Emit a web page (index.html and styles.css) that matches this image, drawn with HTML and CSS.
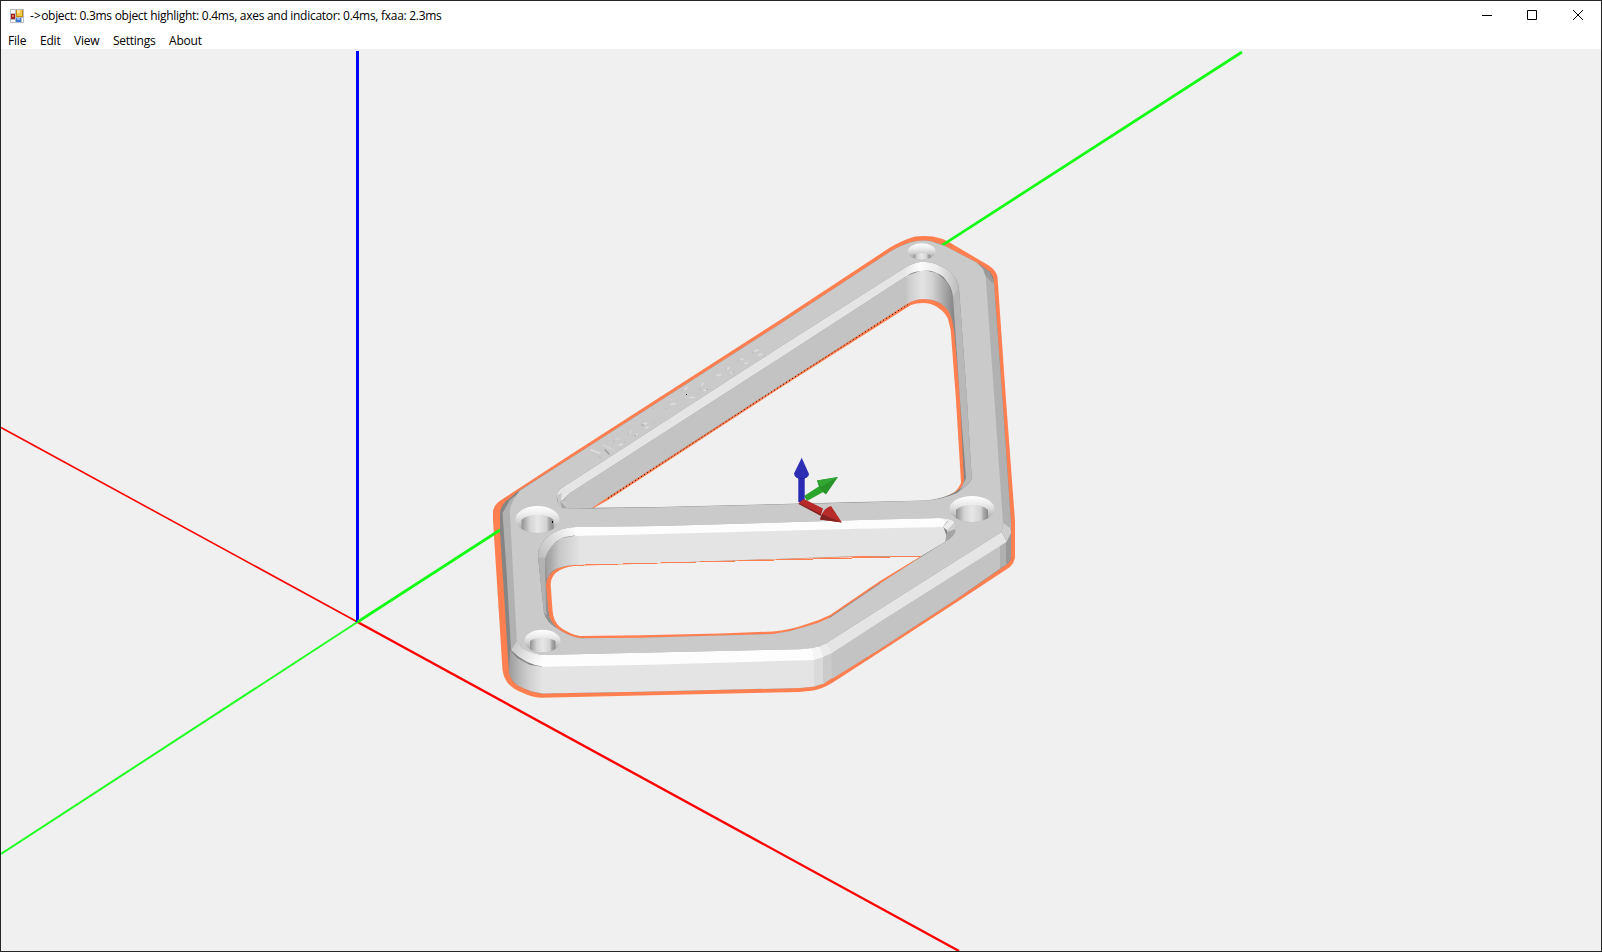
FILE: index.html
```
<!DOCTYPE html>
<html lang="en">
<head>
<meta charset="utf-8">
<title>Model viewer</title>
<link rel="stylesheet" href="styles.css">
</head>
<body>
<div class="window">
  <header class="titlebar">
    <svg class="app-icon" width="14" height="14" viewBox="0 0 14 14" shape-rendering="crispEdges">
      <rect width="14" height="14" fill="#b9bcc0"/>
      <path d="M1 1h4v3H1zM1 11h4v2H1zM12 9h1v4h-1z" fill="#fff"/>
      <rect x="6" y="1" width="7" height="7" fill="#c58b12"/><rect x="7" y="1" width="5" height="6" fill="#f9c846"/><rect x="7" y="1" width="3" height="3" fill="#ffe59a"/>
      <rect x="1" y="5" width="4" height="5" fill="#a52019"/><rect x="2" y="6" width="2" height="2" fill="#e37b6d"/>
      <rect x="6" y="9" width="5" height="4" fill="#3b78d8"/><rect x="7" y="9" width="3" height="2" fill="#8fbaf5"/>
    </svg>
    <span class="title"><span class="arrow">-&gt;</span>object: 0.3ms object highlight: 0.4ms, axes and indicator: 0.4ms, fxaa: 2.3ms</span>
    <div class="controls">
      <svg width="46" height="29" viewBox="0 0 46 29"><path d="M18 14.5h10" class="ctl"/></svg>
      <svg width="46" height="29" viewBox="0 0 46 29"><path d="M17.5 9.5h9v9h-9z" class="ctl"/></svg>
      <svg width="46" height="29" viewBox="0 0 46 29"><path d="M17 9l10 10M27 9L17 19" class="ctl"/></svg>
    </div>
  </header>
  <nav class="menu">
    <span class="m-file">File</span><span class="m-edit">Edit</span><span class="m-view">View</span><span class="m-settings">Settings</span><span class="m-about">About</span>
  </nav>
  <main class="viewport">
    <svg class="scene" width="1600" height="902" viewBox="1 49 1600 902">
      <defs>
        <linearGradient id="wallTop" gradientUnits="userSpaceOnUse" x1="905" y1="0" x2="954" y2="0">
          <stop offset="0" stop-color="#c3c3c3"/><stop offset=".1" stop-color="#cfcfcf"/><stop offset=".35" stop-color="#e3e3e3"/><stop offset=".55" stop-color="#d2d2d2"/><stop offset=".8" stop-color="#a8a8a8"/><stop offset="1" stop-color="#858585"/>
        </linearGradient>
        <linearGradient id="wallLow" gradientUnits="userSpaceOnUse" x1="543" y1="0" x2="580" y2="0">
          <stop offset="0" stop-color="#999"/><stop offset=".2" stop-color="#a8a8a8"/><stop offset=".45" stop-color="#c8c8c8"/><stop offset="1" stop-color="#e3e3e3"/>
        </linearGradient>
        <linearGradient id="chLow" gradientUnits="userSpaceOnUse" x1="538" y1="556" x2="576" y2="530">
          <stop offset="0" stop-color="#bdbdbd"/><stop offset=".45" stop-color="#dadada"/><stop offset="1" stop-color="#fdfdfd"/>
        </linearGradient>
        <linearGradient id="chTop" gradientUnits="userSpaceOnUse" x1="903" y1="0" x2="960" y2="0">
          <stop offset="0" stop-color="#e5e5e5"/><stop offset=".3" stop-color="#fbfbfb"/><stop offset=".6" stop-color="#ececec"/><stop offset="1" stop-color="#b9b9b9"/>
        </linearGradient>
        <linearGradient id="front" gradientUnits="userSpaceOnUse" x1="509" y1="0" x2="543" y2="0">
          <stop offset="0" stop-color="#9c9c9c"/><stop offset=".3" stop-color="#b8b8b8"/><stop offset=".6" stop-color="#d0d0d0"/><stop offset="1" stop-color="#e4e4e4"/>
        </linearGradient>
        <linearGradient id="frontCh" gradientUnits="userSpaceOnUse" x1="512" y1="642" x2="543" y2="660">
          <stop offset="0" stop-color="#c2c2c2"/><stop offset=".5" stop-color="#e3e3e3"/><stop offset="1" stop-color="#fdfdfd"/>
        </linearGradient>
        <linearGradient id="bowl" x1="0" y1="0" x2="0" y2="1">
          <stop offset="0" stop-color="#fff"/><stop offset=".3" stop-color="#ededed"/><stop offset=".55" stop-color="#d4d4d4"/><stop offset=".8" stop-color="#b2b2b2"/><stop offset="1" stop-color="#aaa"/>
        </linearGradient>
        <linearGradient id="bore" x1="0" y1="0" x2="1" y2="0">
          <stop offset="0" stop-color="#909090"/><stop offset=".14" stop-color="#b6b6b6"/><stop offset=".26" stop-color="#d4d4d4"/><stop offset=".5" stop-color="#e7e7e7"/><stop offset=".78" stop-color="#d3d3d3"/><stop offset=".86" stop-color="#aaa"/><stop offset="1" stop-color="#888"/>
        </linearGradient>
        <clipPath id="c1"><ellipse cx="537.5" cy="519.5" rx="22" ry="13.5"/></clipPath>
        <clipPath id="c2"><ellipse cx="542.5" cy="641" rx="18" ry="11.2"/></clipPath>
        <clipPath id="c3"><ellipse cx="921.7" cy="251.5" rx="14" ry="8.2"/></clipPath>
        <clipPath id="c4"><ellipse cx="972" cy="509" rx="22.5" ry="13"/></clipPath>
      </defs>

      <!-- world axes -->
      <g fill="none">
        <path d="M1 427.5L357.5 622" stroke="#ff0000" stroke-width="1.6"/>
        <path d="M357.5 622L959 951" stroke="#ff0000" stroke-width="2.4"/>
        <path d="M1 854L357.5 622" stroke="#22ff22" stroke-width="2"/>
        <path d="M357.5 51V622" stroke="#0000ff" stroke-width="3"/>
      </g>

      <!-- highlight silhouette -->
      <path fill="#ff7f50" fill-rule="evenodd" d="M493 520V511Q494 505 500 500.7L570 455L780 320L890 247.5Q903 240 915 236.5Q925 235.5 933 236.5Q941 238 948 241.5L988 265Q996 270 997.5 277L1006 400L1015 521V558Q1014 563 1010 567L960 600L880 652L832 683Q822 689 813 690.5L800 692L640 695.5L541 697.7Q531 697 523 693Q512 689 507 682Q503 676 502.5 670ZM592 509L608 500L780 388L911 305Q916 303 923 303Q931 303 937 307Q945 312 948 319L950.7 330L956 400L961 483Q957 491 953 493Q943 499 927 501L883 502.3ZM550.7 585Q550.5 575 560 570Q568 566 577 565.7L660 563.3L860 557L920 556.7L880 581L830 615Q818 621 807 624Q790 630 773 631.5L720 633.5L640 635.3L580 636Q569 634 560 627Q553 621 552.5 610Z"/>
      <path d="M357.5 622L500 530M942 245.3L1242 52" stroke="#14fb14" stroke-width="2.7" fill="none"/>

      <!-- side walls -->
      <path fill="#858585" fill-rule="evenodd" d="M500 531V513Q500 508 505 502L517 492L570 458.5L780 324L892 250.5Q905 243 917 241Q925 240 932 241.5L945 246L977 262.7L990 271.7Q993.5 276 994 283L1002.5 400L1011 523V557Q1010 562 1006 565L955 600L880 649L827 681Q819 686 810 687L800 688L640 691.7L542 693.5Q531 692 523 688Q514 684 511 678L509 673ZM575 508L608 497L780 385.5L911 301Q916 299 923 299Q933 299 940 303Q949 309 952 317L954.7 330L960 400L964 480Q964 486 957 491Q943 499 927 500.5L860 502L660 507ZM546 585Q546 575 557 568.5Q566 565 577 564.5L660 563L860 556L921 557L880 584L830 618Q818 624 807 626.5Q790 632 773 634.3L720 635.8L640 638L580 638.5Q568 636 558 629Q549 621 548 611Z"/>
      <path fill="#b1b1b1" d="M502.5 513L510 500L516 495L511 508L517 640L511 650L506.5 570ZM983 268L989.5 272.5L994 283L1002.5 400L1011 523V533L1003 530L994 400L985 277Z"/>
      <path fill="#999" d="M979 264.5L990 272.5L993.5 284L985 275Z"/>

      <!-- top face with both openings cut out -->
      <path fill="#cacaca" fill-rule="evenodd" d="M510 515Q509 503 520 490.5L570 458.5L780 324L892 250.5Q905 243 917 241Q925 240 932 241.5L945 246L977 262.7L983 269L985.7 277L994.5 400L1003 523L1001.7 532L880 609L827 642.7Q820 648 800 649.3L640 652.7L543 655Q534 654.5 522 648L516.7 640ZM557 495Q557 489 570 482.7L780 347L905 267.7Q914 262 923 261.7Q933 262 940 266Q949 269 953 275Q958 281 959 288L967 400L971.7 478Q971 482 967 485L957 493Q943 499 927 500.5L860 502.5L660 507.2L592 508.5L563 508.5Q556 504 557 495ZM538 557Q537 545 550 535Q562 527 577 527L660 526L860 520L940 518Q948 518 955 522Q958 527 954 534L948 540L921 557L880 583.6L830 617.5Q818 623.5 807 626.3Q790 632 773 634L720 635.6L640 637.7L580 638.3Q568 636 558 629Q546 622 544 613Z"/>

      <!-- upper opening: left wall, chamfer, arc -->
      <path fill="#c3c3c3" d="M562 502L570 493L780 358L908 275L910 302L780 385.5L608 497L592 508L563 509Q559 505 562 502Z"/>
      <path fill="url(#wallTop)" d="M906 276L923 270L937 273L948 283L953 297L958 370L955 340Q954 322 949 312Q941 299 923 299Q916 299 906 304Z"/>
      <path fill="#e5e5e5" d="M557 494Q558 489 570 482.7L780 347L905 267.7L908 275L780 358L570 493L562 501Q557 500 557 494Z"/>
      <path fill="#c8c8c8" d="M557 495L562 493L561 500L568 506L563 509Q557 506 557 495Z"/>
      <path fill="#a5a5a5" d="M560 501L567 508H562Z"/>
      <path fill="url(#chTop)" d="M905 267.7Q914 262 923 261.7Q933 262 940 266Q949 269 953 275Q958 281 959 289L953 297Q952 288 948 283Q943 275 937 273Q930 270 923 270.7Q914 271 908 275L903 277Z"/>
      <path fill="#b8b8b8" d="M953 297L959 288L967 400L971.7 478Q971 482 967 485L960 490L966 478L960 400Z"/>

      <!-- lower opening -->
      <path fill="#b2b2b2" d="M538 557L545 556L547 618L544 613Z"/>
      <path fill="#939393" d="M545 556L549 570Q545 577 546 588L549 618L546 611ZM544 613L549 617Q552 624 558 629L551 624Z"/>
      <path fill="#e4e4e4" d="M575 535L660 533L860 528L943 526L948 540L921 556.3L860 556L660 563L577 565Z"/>
      <path fill="url(#wallLow)" d="M545 557Q546 548 552 545L562 538L580 535V564.5Q566 565 557 568.5Q549 572 547 580Z"/>
      <path fill="#fdfdfd" d="M575 527L660 526L860 520L940 518L948 520L943 527L860 528.7L660 534L575 536Z"/>
      <path fill="url(#chLow)" d="M538 557Q537 545 550 535Q562 527 577 527L581 535Q568 536 562 538Q550 544 545 558Z"/>
      <path fill="#ebebeb" d="M940 518Q949 518 955 522L948 531L943 527L948 521Z"/>
      <path fill="#cfcfcf" d="M955 522Q957.5 526 955.5 531L947 534L947 530Z"/>
      <path fill="#a5a5a5" d="M947 532L956 529L953 536L945 542Z"/>
      <path d="M829 618L880 583.3" stroke="#a58d84" stroke-width="1"/>

      <!-- front and right outer faces -->
      <path fill="url(#front)" d="M510 650L517 658L530 665L543 666.7V693.5Q531 692 523 688Q514 684 511 678L509 673Z"/>
      <path fill="#e4e4e4" d="M542 666L640 664L815 659V686.4L800 688L640 691.7L542 693.5Z"/>
      <path fill="#dadada" d="M814 659L824 656V683.5L814 686.5Z"/><path fill="#cbcbcb" d="M823 656L833 652V677.5L823 684Z"/>
      <path fill="#c3c3c3" d="M831.7 652L880 621L1001 543V568L955 600L880 649L831.7 679Z"/>
      <path fill="#b0b0b0" d="M1000 545L1006.5 541V564.5L1000 568.5Z"/><path fill="#999" d="M1006 541L1011 533V557Q1010 562 1006 565Z"/>
      <path fill="url(#frontCh)" d="M511 650L517 640L522 648Q534 654.5 544 655V666.7Q526 665 511 650Z"/>
      <path fill="#fdfdfd" d="M543 655L640 652.7L800 649.3L812.5 648L814.5 660L640 665L543 666.7Z"/>
      <path fill="#f5f5f5" d="M812 648L820.5 646L823.5 657L814 660Z"/><path fill="#ebebeb" d="M820 646L827.5 642.7L832.5 652.8L823 657Z"/>
      <path fill="#e5e5e5" d="M827 642.7L880 609L1001.7 532L1006.7 541.7L880 621.7L832 653Z"/>
      <path fill="#cecece" d="M1001.7 532L1003 523L1010 528L1011 533L1006.7 541.7Z"/>

      <!-- countersunk holes -->
      <g clip-path="url(#c1)"><rect x="515" y="506" width="45" height="28" fill="url(#bowl)"/><path fill="url(#bore)" d="M521.5 533V520Q526 515 537.5 515Q549 515 553.5 520V533Z"/><path fill="#000" d="M552 521h1v2h-1z"/></g>
      <g clip-path="url(#c2)"><rect x="524" y="629.5" width="37" height="23" fill="url(#bowl)"/><path fill="url(#bore)" d="M530 652V641Q534 638 542.5 638Q551 638 555.5 641V652Z"/></g>
      <g clip-path="url(#c3)"><rect x="907" y="243" width="29" height="17" fill="url(#bowl)"/><path fill="url(#bore)" d="M913 260V255Q921 251 930.5 255V260Z"/></g>
      <g clip-path="url(#c4)"><rect x="949" y="496" width="46" height="26" fill="url(#bowl)"/><path fill="url(#bore)" d="M956 522V510Q961 505 971.5 505Q983 505 988 510V522Z"/></g>

      <!-- engraved marks -->
      <g fill="none" stroke-width="1.6" stroke-linecap="round">
        <path stroke="#dedede" d="M591 450l9 3M619 445l3-1M635 435.5l2-1M644 424l3-1M646 428l2-1M671 404.5l4-1M690 397.5l4 0M704 390.5l3-1M717 375.5l4-1M731 373l2-1M741 359.5l2-1M745 363.5l2-1M755 351l3-1M759 355l3-1M685 389.5l2-2M702 385l1-2M727 369l2-1"/>
        <path stroke="#d4d4d4" d="M603 445l11 5M616 439.5l3-1M630 433l1-2"/>
        <path stroke="#bcbcbc" stroke-width="1.2" d="M599 457l2 1M614 440v2M625 442.5v-1M628 434v-1M641 424l1 2M654 423h.5M653 409h1M666 408.5h1M682 391v-1M698 395v-.5M700 389v1M714 378v-.5M726 369v-1M738 361v-1M753 353v-1M758 347v.5"/>
        <path stroke="#999" stroke-width="1.2" d="M605 450l4 4M643 425h.5M635 435.5h.5M733 372h.5M707 389.5h.5"/>
      </g>
      <path d="M686 394h1v1h-1z" fill="#000"/>
      <path d="M608 498.3L780 386.5L908 304.5" stroke="#000" stroke-width="1" stroke-dasharray="1 2.6" fill="none"/>
      <path d="M577 565.5h7M585 564.5H618M623 563.5H657M661 562.5H696M700 561.5H735M738 560.5H774M776 559.5H813M813 558.5H852M852 557.5H890M890 556.5H921" fill="none" stroke="#ff7f50" stroke-width="1"/>

      <!-- orientation gizmo -->
      <g>
        <path d="M804 496L821 485L825 491L807 501Z" fill="#2ba52b"/>
        <path d="M838 477L817 480.5Q819 490 826 494.5Z" fill="#299229"/><path d="M838 477L817 480.5L821 487Z" fill="#34a634"/>
        <rect x="798.3" y="475" width="6.4" height="27" fill="#2929b4"/>
        <path d="M801.7 457.7L794 473.5Q795 478.5 801.5 479Q808 478.5 809 474Z" fill="#2e2eb5"/><path d="M794 473.5Q795 478.5 801.5 479Q808 478.5 809 474L807 477Q801 479 796 477Z" fill="#23239b"/>
        <path d="M798.5 503L804 499L823 508.5L821 515Z" fill="#b82a2a"/><path d="M799 503L821 514V516L798.5 504Z" fill="#842020"/>
        <path d="M842 522.5L831 506Q823 508 820 519.5Z" fill="#b72b2b"/><path d="M842 522.5L820 519.5L822 514Z" fill="#842222"/>
      </g>
    </svg>
  </main>
</div>
</body>
</html>
```
FILE: styles.css
```
* { box-sizing: border-box; }

body {
  margin: 0;
  background: #262626;
  font-family: "Open Sans", "Noto Sans", sans-serif;
  font-size: 12px;
  color: #000;
}

.window {
  display: flex;
  flex-direction: column;
  width: 1602px;
  height: 952px;
  border: 1px solid #262626;
  background: #fff;
  overflow: hidden;
}

.titlebar {
  display: flex;
  align-items: center;
  height: 29px;
  flex: none;
  padding-left: 9px;
}

.app-icon { flex: none; }

.title {
  margin-left: 6px;
  white-space: nowrap;
  line-height: 16px;
  letter-spacing: -0.28px;
}

.arrow { letter-spacing: 0.2px; }

.controls {
  display: flex;
  margin-left: auto;
  margin-right: -1px;
  height: 29px;
}

.controls svg { flex: none; }

.ctl {
  fill: none;
  stroke: #000;
  stroke-width: 1;
}

.menu {
  display: flex;
  flex: none;
  height: 19px;
  padding-left: 7px;
  line-height: 21px;
  letter-spacing: -0.2px;
}

.m-file { width: 32px; }
.m-edit { width: 34px; }
.m-view { width: 39px; }
.m-settings { width: 56px; letter-spacing: -0.27px; }

.viewport {
  flex: 1;
  min-height: 0;
  background: #f0f0f0;
}

.scene { display: block; }
```
